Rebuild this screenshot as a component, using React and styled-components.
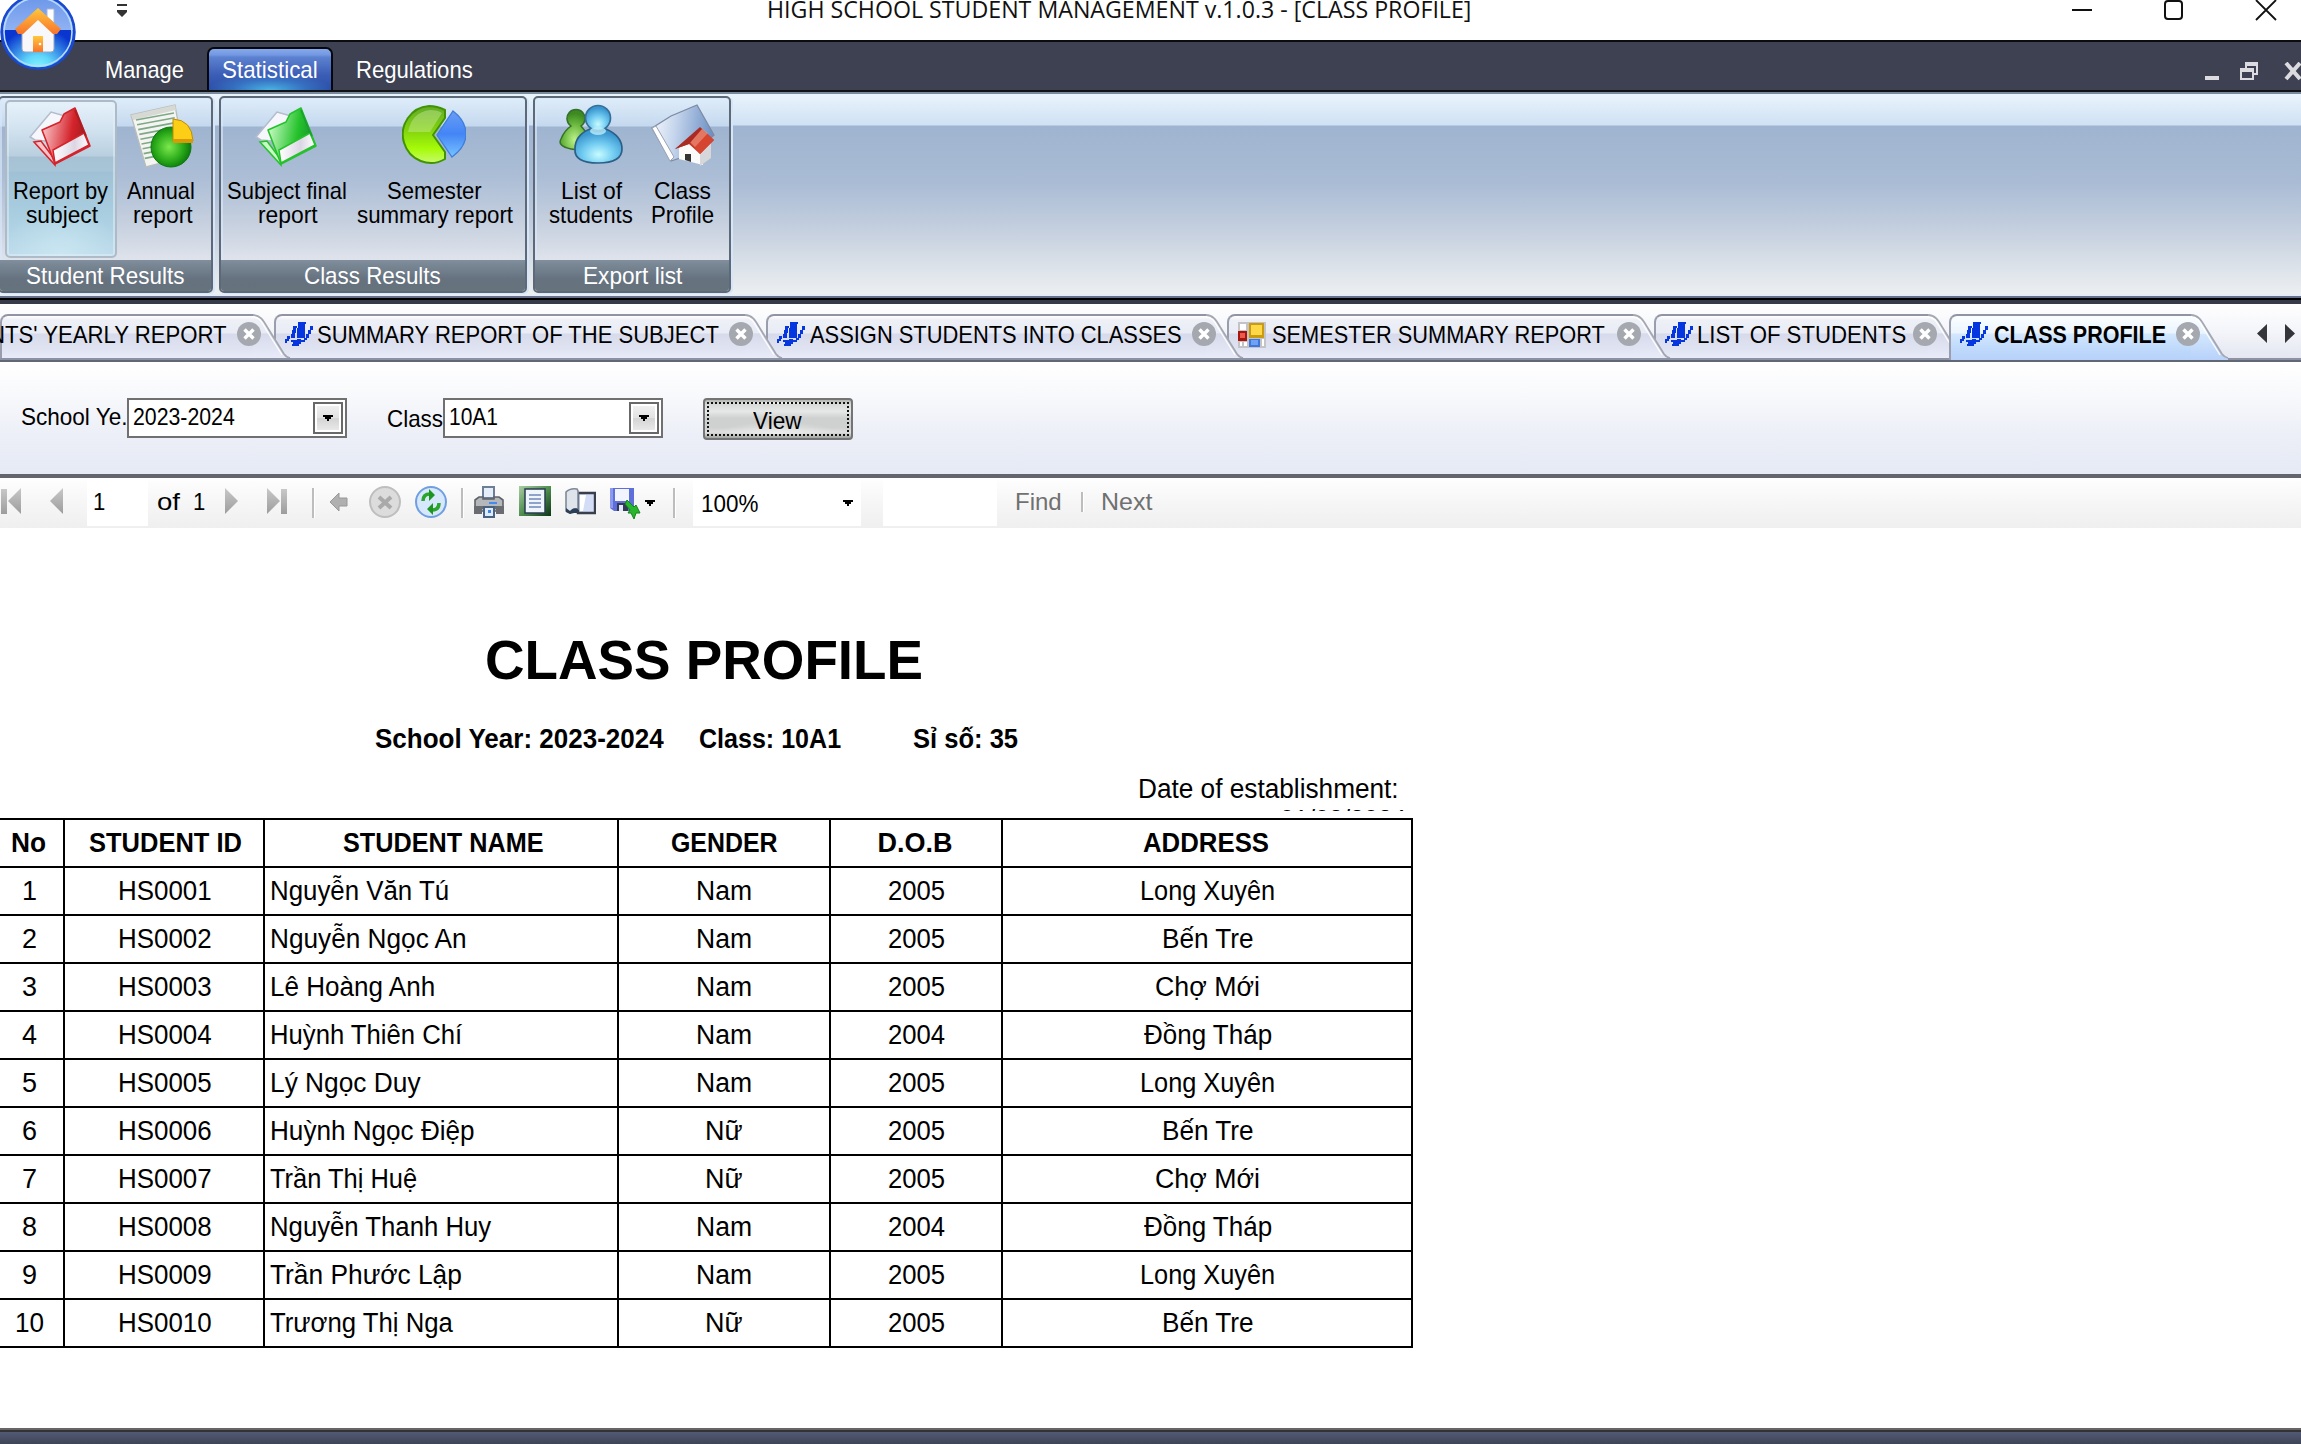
import React, { useLayoutEffect, useRef, useState } from 'react';
import styled, { createGlobalStyle, css } from 'styled-components';

const Global = createGlobalStyle`
  * { box-sizing: border-box; }
  body { margin: 0; background: #fff; color: #000; font-family: "Liberation Sans", Arial, sans-serif; overflow: hidden; }
  svg { display: block; flex: none; }
`;

/* A label squeezed horizontally to a given width */
const FitBox = styled.span`
  display: block;
  flex: none;
  width: ${(p) => p.$w}px;
  margin-left: ${(p) => p.$ml || 0}px;
  margin-right: ${(p) => p.$mr || 0}px;
  white-space: pre;
`;
const FitText = styled.span`
  display: inline-block;
  transform-origin: 0 50%;
`;
function Fit({ w, ml, mr, children }) {
  const ref = useRef(null);
  const [scale, setScale] = useState(1);
  useLayoutEffect(() => {
    setScale(w / ref.current.offsetWidth);
  }, [w]);
  return (
    <FitBox $w={w} $ml={ml} $mr={mr}>
      <FitText ref={ref} style={{ transform: `scaleX(${scale})` }}>{children}</FitText>
    </FitBox>
  );
}

const Window = styled.div`
  width: 2301px;
  height: 1444px;
  display: flex;
  flex-direction: column;
  overflow: hidden;
  position: relative;
  background: #fff;
`;

/* ---------- Title bar ---------- */
const TitleBar = styled.header`
  height: 40px;
  flex: none;
  display: flex;
  align-items: flex-start;
  padding-left: 117px;
  font: 24px/32px "Open Sans", "Noto Sans", sans-serif;
`;
const QuickMenu = styled.div`
  margin-top: 4px;
  width: 10px;
`;
const TitleText = styled.div`
  margin: -7px 0 0 640px;
  color: #111;
`;
const Orb = styled.div`
  position: absolute;
  left: 0;
  top: -6px;
`;

/* ---------- Menu band ---------- */
const MenuBand = styled.nav`
  height: 52px;
  flex: none;
  border-top: 2px solid #0b0c10;
  border-bottom: 2px solid #101216;
  background: #3d4151;
  display: flex;
  font-size: 24px;
  line-height: 28px;
  color: #fff;
`;
const MenuItem = styled.div`
  width: ${(p) => p.$w}px;
  margin-left: ${(p) => p.$ml || 0}px;
  margin-top: 5px;
  padding-top: 9px;
  display: flex;
  justify-content: center;
  ${(p) =>
    p.$active &&
    css`
      height: 43px;
      padding-top: 7px;
      border: 2px solid #05070c;
      border-bottom: 0;
      border-radius: 7px 7px 0 0;
      background: radial-gradient(ellipse 62px 17px at 50% 100%, #4ab4e4, rgba(60, 140, 215, 0.5) 60%, transparent),
        linear-gradient(#86a9ec 0, #7398e2 6px, #5d82d0 8px, #3b5db6 26px, #2a4fa6);
    `}
`;
const MdiButtons = styled.div`
  margin-left: auto;
  padding-top: 20px;
`;

/* ---------- Ribbon ---------- */
const Ribbon = styled.section`
  height: 204px;
  flex: none;
  border-top: 2px solid #7b899c;
  background: linear-gradient(#eaf4fd 0, #cfe1f3 31px, #9fb4d0 32px, #aabcd5 90px, #cdd6e2 150px, #eef0f2 202px);
  display: flex;
  align-items: flex-start;
  gap: 6px;
  padding-top: 2px;
`;
const Group = styled.div`
  width: ${(p) => p.$w}px;
  margin-left: ${(p) => p.$ml || 0}px;
  height: 197px;
  flex: none;
  border: 2px solid #5d6978;
  border-radius: 5px;
  box-shadow: 2px 1px 0 #d6e5f7, inset 2px 1px 0 rgba(216, 232, 250, 0.65);
  background: linear-gradient(#dfedfa 0, #c4d8ee 28px, #9fb4d0 29px, #acbed6 80px, #c6d0df 125px, #e0e4ec 164px);
  display: flex;
  flex-direction: column;
  overflow: hidden;
`;
const GroupBody = styled.div`
  height: 164px;
  display: flex;
  padding: 2px 0 0 ${(p) => p.$pl}px;
`;
const GroupLabel = styled.div`
  flex: 1;
  background: linear-gradient(#808e9d, #66727f 60%, #65737c);
  color: #fff;
  display: flex;
  padding-left: ${(p) => p.$pl}px;
  font-size: 24px;
  line-height: 31px;
`;
const RibbonButton = styled.div`
  width: ${(p) => p.$w}px;
  margin-right: ${(p) => p.$mr || 0}px;
  height: 158px;
  flex: none;
  display: flex;
  flex-direction: column;
  align-items: center;
  padding-top: 2px;
  font-size: 24px;
  line-height: 24px;
  border: 2px solid transparent;
  border-radius: 5px;
  ${(p) =>
    p.$active &&
    css`
      border-color: #aebbc6;
      box-shadow: inset 0 0 0 2px rgba(225, 240, 250, 0.5);
      background: radial-gradient(ellipse 60px 50px at 50% 100%, #c9e6f1, transparent),
        linear-gradient(#e6f2fb 0, #d3e3f0 26px, #b9cfdf 54px, #a6c1d4 55px, #a8c5d8 69px, #a0c1d5 70px, #aacfe1 115px, #bedbeb 156px);
    `}
`;
const Icon64 = styled.div`
  height: 75px;
  flex: none;
`;

const RibbonRule = styled.div`
  height: 10px;
  flex: none;
  margin-top: -2px;
  background: linear-gradient(#e6edf6 0 2px, #66718f 2px 4px, #000 4px 6px, #373b49 6px);
`;

/* ---------- Document tabs ---------- */
const TabStrip = styled.div`
  height: 56px;
  flex: none;
  border-bottom: 2px solid #8e92a2;
  background: linear-gradient(#fff, #f4f5fa 50%, #e4e7f1);
  display: flex;
  align-items: flex-start;
  padding-top: 10px;
  font-size: 24px;
  line-height: 28px;
`;
const TabBox = styled.div`
  position: relative;
  z-index: ${(p) => p.$z};
  width: ${(p) => p.$w}px;
  flex: none;
  display: flex;
`;
const TabBody = styled.div`
  width: ${(p) => p.$w - 21}px;
  height: ${(p) => (p.$active ? 46 : 44)}px;
  flex: none;
  display: flex;
  align-items: flex-start;
  padding: 5px 0 0 ${(p) => p.$pl}px;
  border-top: 2px solid #9094a4;
  border-left: 2px solid #9a9eac;
  border-top-left-radius: 8px;
  font-weight: ${(p) => (p.$active ? 'bold' : 'normal')};
  background: ${(p) =>
    p.$active
      ? 'linear-gradient(#fbfeff, #eaf4fe 17px, #d3e7fd 18px, #bfdafb 32px, #b7d1fa)'
      : 'linear-gradient(#fff, #eef0f7 4px, #e9ecf5 17px, #d6daeb 18px, #dfe3f1 32px, #e8ebf8)'};
`;
const TabClose = styled.div`
  position: relative;
  z-index: 2;
  margin: 1px 0 0 ${(p) => p.$ml}px;
`;
const TabIcon = styled.div`
  margin: 1px 4px 0 0;
`;
const StripArrows = styled.div`
  margin: 10px 0 0 45px;
`;

/* ---------- Filter panel ---------- */
const FilterPanel = styled.section`
  height: 118px;
  flex: none;
  border-top: 2px solid #606876;
  border-bottom: 4px solid #62656e;
  background: linear-gradient(#fff, #f8f9fc 30%, #eceff7 65%, #e6eaf5);
  display: flex;
  align-items: flex-start;
  padding: 36px 0 0 21px;
  font-size: 24px;
  line-height: 36px;
`;
const FieldLabel = styled.label`
  width: ${(p) => p.$w}px;
  margin-left: ${(p) => p.$ml || 0}px;
  padding-top: ${(p) => p.$pt || 0}px;
  flex: none;
`;
const Select = styled.div`
  width: 220px;
  height: 40px;
  flex: none;
  border: 2px solid #707070;
  background: #fff;
  display: flex;
  justify-content: space-between;
  padding: 0 2px 0 4px;
  line-height: 34px;
`;
const SelectButton = styled.div`
  width: 30px;
  height: 32px;
  margin-top: 2px;
  border: 2px solid #686868;
  box-shadow: inset 0 0 0 2px #fff;
  background: linear-gradient(#f2f2f2, #e2e2e2 50%, #d4d4d4 52%, #ececec);
  display: flex;
  align-items: center;
  justify-content: center;
`;
const ViewButton = styled.div`
  width: 150px;
  height: 42px;
  margin-left: 40px;
  border: 2px solid #747474;
  border-radius: 4px;
  padding: 2px;
  background: linear-gradient(#b4b6b4, #d8dad8 12%, #e6e8e7 30%, #cfd1d0 48%, #cfd1d0 72%, #dedfde 85%, #a2a4a2);
`;
const ViewFocus = styled.div`
  height: 34px;
  border: 2px dotted #111;
  display: flex;
  justify-content: center;
  padding-right: 2px;
  line-height: 33px;
  background: radial-gradient(ellipse 60px 12px at 50% 100%, #eeefee, transparent);
`;

/* ---------- Report toolbar ---------- */
const Toolbar = styled.div`
  height: 50px;
  flex: none;
  display: flex;
  align-items: flex-start;
  background: linear-gradient(#fefefe, #f6f6f6 50%, #efefef);
  font-size: 24px;
  line-height: 28px;
`;
const Item = styled.div`
  margin: ${(p) => p.$y}px 0 0 ${(p) => p.$ml}px;
  color: ${(p) => (p.$muted ? '#707070' : '#000')};
  flex: none;
`;
const Separator = styled.div`
  width: 3px;
  height: ${(p) => p.$h || 30}px;
  margin: ${(p) => p.$y || 10}px 0 0 ${(p) => p.$ml}px;
  border-left: 2px solid #bdbdbd;
  border-right: 1px solid #fff;
  flex: none;
`;
const Field = styled.div`
  width: ${(p) => p.$w}px;
  height: 46px;
  margin: 2px 0 0 ${(p) => p.$ml}px;
  padding: ${(p) => p.$pt || 8}px 8px 0 8px;
  background: #fff;
  display: flex;
  justify-content: space-between;
  flex: none;
`;

/* ---------- Report ---------- */
const Report = styled.main`
  flex: 1;
  overflow: hidden;
  background: #fff;
`;
const Heading = styled.h1`
  margin: 0;
  padding: 98px 0 0 485px;
  font-size: 56px;
  line-height: 68px;
  height: 194px;
`;
const Summary = styled.div`
  display: flex;
  height: 52px;
  padding-left: 375px;
  font-size: 27px;
  line-height: 34px;
  font-weight: bold;
`;
const Established = styled.div`
  height: 37px;
  width: 1406px;
  overflow: hidden;
  display: flex;
  flex-direction: column;
  align-items: flex-end;
  font-size: 27px;
  line-height: 31px;
`;
const Table = styled.div`
  margin: 7px 0 0 -6px;
  width: 1419px;
  border: solid #000;
  border-width: 2px 2px 0 2px;
`;
const Row = styled.div`
  display: grid;
  grid-template-columns: 69px 200px 354px 212px 172px 1fr;
  height: 48px;
  border-bottom: 2px solid #000;
  font-size: 27px;
  line-height: 47px;
  font-weight: ${(p) => (p.$head ? 'bold' : 'normal')};
`;
const Cell = styled.div`
  display: flex;
  justify-content: ${(p) => (p.$left ? 'flex-start' : 'center')};
  padding-left: ${(p) => p.$pl || 0}px;
  padding-right: ${(p) => p.$pr || 0}px;
  border-right: 2px solid #000;
  &:last-child { border-right: 0; }
`;
const StatusBar = styled.footer`
  height: 16px;
  flex: none;
  border-top: 2px solid #666;
  background: linear-gradient(#333 0 2px, #515a76 2px, #3f4455);
`;

/* ---------- Icons ---------- */
const HomeOrb = () => (
  <svg width="77" height="77" viewBox="0 0 77 77">
    <defs>
      <linearGradient id="orbTop" x1="0" y1="0" x2="0" y2="1">
        <stop offset="0" stopColor="#6a95e8" /><stop offset="1" stopColor="#8fb2f3" />
      </linearGradient>
      <radialGradient id="orbLow" cx=".5" cy="1.02" r=".58">
        <stop offset="0" stopColor="#8ffcff" /><stop offset=".35" stopColor="#5fd6fb" /><stop offset="1" stopColor="#0a36cf" />
      </radialGradient>
      <linearGradient id="roof" x1="0" y1="0" x2="0" y2="1">
        <stop offset="0" stopColor="#ffc83c" /><stop offset="1" stopColor="#f8742c" />
      </linearGradient>
    </defs>
    <circle cx="38" cy="38" r="37" fill="url(#orbLow)" />
    <path d="M3 36a35 35 0 0 1 70 0z" fill="url(#orbTop)" />
    <circle cx="38" cy="38" r="36.5" fill="none" stroke="#1a49cf" strokeWidth="2.5" />
    <circle cx="38" cy="38" r="34" fill="none" stroke="#b6dcff" strokeWidth="1.6" />
    <path d="M47 15h7v14l-7-6z" fill="#fff" stroke="#a9b6d8" />
    <path d="M22 36L38 22l16 14v19q0 3-3 3H25q-3 0-3-3z" fill="#f8f8fa" stroke="#9aa5bb" />
    <path d="M15 35L38 14l23 21-4 5h-4L38 26 23 40h-5z" fill="url(#roof)" />
    <path d="M33 42h10v16H33z" fill="url(#roof)" /><circle cx="40" cy="50" r="1.3" fill="#fff" />
  </svg>
);

const BookIcon = ({ c1, c2, c3, id }) => (
  <svg width="64" height="64" viewBox="2 0 64 64">
    <defs>
      <linearGradient id={id} x1="0" y1=".4" x2="1" y2=".6">
        <stop offset="0" stopColor={c3} /><stop offset=".6" stopColor={c1} /><stop offset="1" stopColor={c2} />
      </linearGradient>
      <linearGradient id={id + 'p'} x1="0" y1="0" x2="1" y2="0">
        <stop offset="0" stopColor="#fff" /><stop offset=".6" stopColor="#dcd6e4" /><stop offset="1" stopColor="#fff" />
      </linearGradient>
    </defs>
    <path d="M3 33L24 8l14 4-8 26-22-2z" fill="#f5f7fc" stroke="#b3bccb" strokeWidth="1.5" />
    <path d="M7 38l7-1 14 19v5z" fill={c3} stroke={c1} strokeWidth="1.5" />
    <path d="M15 26l18-8 4-8 11-6 15 38-35 18z" fill={`url(#${id})`} stroke={c1} strokeWidth="1.6" strokeLinejoin="round" />
    <path d="M26 46l31-17 5 12-34 18z" fill={`url(#${id}p)`} stroke={c1} strokeWidth="1.5" />
    <path d="M48 6l11 26" stroke={c2} strokeWidth="2" opacity=".5" />
  </svg>
);

const AnnualIcon = () => (
  <svg width="64" height="64" viewBox="0 0 64 64">
    <defs><radialGradient id="grn" cx=".45" cy=".5" r=".55"><stop offset="0" stopColor="#7ce84e" /><stop offset=".6" stopColor="#2fae1c" /><stop offset="1" stopColor="#0b7a0c" /></radialGradient></defs>
    <path d="M1 11L45 1l9 52-38 10z" fill="#f4f5f2" stroke="#b8bdb8" strokeWidth="1.3" />
    <path d="M1 11L45 1l1 5L3 16z" fill="#d7d9d5" />
    {[0, 1, 2, 3, 4, 5, 6, 7, 8].map((i) => (
      <path key={i} d={`M${6 + i * 1.1} ${16 + i * 4.8}L${44 + i * 0.8} ${9 + i * 4.8}`} stroke="#7fa886" strokeWidth="1.6" />
    ))}
    <circle cx="41" cy="43" r="20" fill="url(#grn)" stroke="#0d7a10" />
    <path d="M43 15q19 1 20 22H43z" fill="#fccf16" stroke="#c08c05" /><path d="M43 35h20v4H43z" fill="#d79a08" />
  </svg>
);

const PieIcon = () => (
  <svg width="64" height="64" viewBox="0 0 64 64">
    <defs>
      <linearGradient id="lime" x1="0" y1="0" x2="0" y2="1"><stop offset="0" stopColor="#62ab28" /><stop offset=".4" stopColor="#7fd010" /><stop offset=".75" stopColor="#a6fb08" /><stop offset="1" stopColor="#c8f96c" /></linearGradient>
      <linearGradient id="pblue" x1="0" y1="0" x2="0" y2="1"><stop offset="0" stopColor="#6a9df5" /><stop offset=".5" stopColor="#4385f6" /><stop offset="1" stopColor="#78c4ff" /></linearGradient>
    </defs>
    <path d="M43 6Q35 2 27 2a28 28.500 0 1 0 16 53V48L31 31 43 14z" fill="url(#lime)" stroke="#419304" strokeWidth="2" strokeLinejoin="round" />
    <path d="M6 28Q10 8 28 6q8 0 12 3L28 28z" fill="#d5efaa" opacity=".4" />
    <path d="M51 7q13 10 13 23T50 53L35 31z" fill="url(#pblue)" stroke="#3f7edc" strokeWidth="1.3" />
  </svg>
);

const PeopleIcon = () => (
  <svg width="64" height="64" viewBox="0 0 64 64">
    <defs>
      <radialGradient id="pb" cx=".5" cy=".75" r=".65"><stop offset="0" stopColor="#c6fbff" /><stop offset=".5" stopColor="#74cdf2" /><stop offset="1" stopColor="#3a96cf" /></radialGradient>
      <radialGradient id="pg" cx=".5" cy=".75" r=".65"><stop offset="0" stopColor="#bcf28b" /><stop offset=".6" stopColor="#6ab83e" /><stop offset="1" stopColor="#3d8a22" /></radialGradient>
    </defs>
    <path d="M12 22a9 9 0 1 1 10 0l8 10v12q-8 3-18 1-14-3-10-10 3-8 10-13z" fill="url(#pg)" stroke="#356f2a" strokeWidth="1.5" />
    <path d="M31 25q8 5 16 0 16 7 16 20 0 14-24 14T16 45q0-14 15-20z" fill="url(#pb)" stroke="#2d5f86" strokeWidth="1.7" />
    <circle cx="39" cy="14" r="12.500" fill="url(#pb)" stroke="#35709a" strokeWidth="1.7" />
    <ellipse cx="39" cy="27" rx="8" ry="4" fill="#b9eefc" opacity=".8" />
  </svg>
);

const ProfileIcon = () => (
  <svg width="64" height="64" viewBox="0 0 64 64">
    <defs><linearGradient id="pf" x1="0" y1=".3" x2="1" y2=".4"><stop offset="0" stopColor="#f3f6fb" /><stop offset=".35" stopColor="#c9d8ee" /><stop offset="1" stopColor="#6a8fc4" /></linearGradient></defs>
    <path d="M1 24L20 12l26-11 17 30-25 20-18 6z" fill="url(#pf)" stroke="#7d8aa2" strokeWidth="1.3" />
    <path d="M1 24l4-2 18 31-4 4z" fill="#fff" stroke="#9aa3b2" />
    <path d="M28 42l14-8 10 16v11L28 55z" fill="#fafafa" /><path d="M49 48l11-11v17L49 62z" fill="#d5d7db" />
    <path d="M50 24L24 45l14-5 11 10 14-14z" fill="#c8382a" /><path d="M50 24L39 38l10 12 14-14z" fill="#d6452f" /><path d="M50 24L39 38l5 5 13-14z" fill="#ec9a83" opacity=".6" />
    <path d="M24 45l25-22 2 2-13 15z" fill="#a92b22" />
    <path d="M34 50h6v8l-6-2z" fill="#333" />
  </svg>
);

const ScribbleIcon = () => (
  <svg width="28" height="24" viewBox="0 0 28 24" fill="#0536e0">
    <path d="M13 0h8v2h-1v14h-8V6h1z" />
    <path d="M8 4h4v2h-1v5h-1v5H6v-4h1V8h1zM25 4h3v4h-2v4h-2v4h-2v2h-3v-2h2v-4h2V8h2z" />
    <path d="M2 14h3v3H4v2H2v2H0v-4h2zM6 18h6v-1h4v1h4v2h-4v2h-2v2H7v-2h1v-2H6z" />
  </svg>
);

const FormIcon = () => (
  <svg width="28" height="26" viewBox="0 0 28 26">
    <path d="M0 0h28v26H0z" fill="#c4c4c6" />
    <path d="M2 2h6v6H2zM2 20h2v4H2zM6 20h3v4H6zM24 17h2v7h-2z" fill="#fff" />
    <path d="M11 1h15v15H11z" fill="#c99a12" /><path d="M13 3h11v10H13z" fill="#ffd848" />
    <path d="M0 9h9v10H0z" fill="#a8150f" /><path d="M2 11h5v5H2z" fill="#ec5a4d" />
    <path d="M11 17h11v8H11z" fill="#3f76dd" /><path d="M13 18h7v5h-7z" fill="#6fa2f5" />
  </svg>
);

const CloseDot = () => (
  <svg width="24" height="24" viewBox="0 0 24 24">
    <circle cx="12" cy="12" r="12" fill="#a5a9af" />
    <path d="M7.500 7.500l9 9m0-9l-9 9" stroke="#fff" strokeWidth="3.400" />
  </svg>
);

const TabEdge = ({ active }) => {
  const h = active ? 46 : 44;
  const id = active ? 'edgeOn' : 'edgeOff';
  return (
    <svg width="38" height={h} viewBox={`0 0 38 ${h}`}>
      <defs>
        <linearGradient id={id} x1="0" y1="0" x2="0" y2="1">
          {active ? (
            <><stop offset=".04" stopColor="#fbfeff" /><stop offset=".42" stopColor="#eaf4fe" /><stop offset=".44" stopColor="#d3e7fd" /><stop offset="1" stopColor="#b7d1fa" /></>
          ) : (
            <><stop offset=".04" stopColor="#fff" /><stop offset=".13" stopColor="#eef0f7" /><stop offset=".43" stopColor="#e9ecf5" /><stop offset=".45" stopColor="#d6daeb" /><stop offset="1" stopColor="#e8ebf8" /></>
          )}
        </linearGradient>
      </defs>
      <path d={`M0 0C8 1 11 8 16 16L31 40Q33 44 37 44V${h}H0z`} fill={`url(#${id})`} />
      <path d="M0 1C8 1 11 8 16 16L31 40Q33 43 37 44" fill="none" stroke="#a4a7b1" strokeWidth="1.8" />
      <path d="M0 3C7 3 9 9 14 17L29 41" fill="none" stroke="#fff" strokeWidth="1.2" />
    </svg>
  );
};

const Caret = ({ w = 10, h = 6 }) => (
  <svg width={w} height={h} viewBox="0 0 10 6"><path d="M0 0h10v2H8v2H6v2H4V4H2V2H0z" fill="#000" /></svg>
);

const NavIcon = ({ kind }) => {
  const w = kind === 'prev' || kind === 'next' ? 14 : 20;
  const flip = kind === 'next' || kind === 'last';
  return (
    <svg width={w} height="26" viewBox={`0 0 ${w} 26`}>
      <defs><linearGradient id="nav" x1="0" y1="0" x2="0" y2="1"><stop offset="0" stopColor="#c8c8c8" /><stop offset="1" stopColor="#9c9c9c" /></linearGradient></defs>
      <g transform={flip ? `translate(${w} 0) scale(-1 1)` : undefined} fill="url(#nav)">
        {w === 20 && <path d="M0 1h6v25H0z" />}
        <path d={`M${w} 0v26L${w - 13} 13z`} />
      </g>
    </svg>
  );
};

const BackIcon = () => (
  <svg width="19" height="20" viewBox="0 0 19 20"><path d="M10 1v5h8v8h-8v5L1 10z" fill="#b0b0b0" stroke="#989898" /></svg>
);
const StopIcon = () => (
  <svg width="32" height="32" viewBox="0 0 32 32"><circle cx="16" cy="16" r="15" fill="#dcdcdc" stroke="#bebebe" strokeWidth="2" /><path d="M10 11l12 11m0-11L10 22" stroke="#a9a9a9" strokeWidth="4" /></svg>
);
const RefreshIcon = () => (
  <svg width="32" height="32" viewBox="0 0 32 32">
    <circle cx="16" cy="16" r="15" fill="#d7e8fd" stroke="#6f9fe0" strokeWidth="2" />
    <path d="M8 15c0-5 3-7 7-7M24 17c0 5-3 7-7 7" fill="none" stroke="#2ba62b" strokeWidth="3.500" />
    <path d="M14 3l6 6-6 6zM18 17l-6 6 6 6z" fill="#1d961f" />
  </svg>
);
const PrintIcon = () => (
  <svg width="32" height="32" viewBox="0 0 32 32">
    <path d="M10 1h11v11H10z" fill="#e5edf8" stroke="#6c7f96" strokeWidth="2" />
    <path d="M2 14l4-3h4v2h11v-2h5l4 3v11H2z" fill="#b5b7bb" stroke="#5e6168" strokeWidth="1.6" />
    <path d="M1 20h30v8h-8v-5H9v5H1z" fill="#6a6c72" /><path d="M16 16h8v2h-8z" fill="#3f8cf2" />
    <path d="M11 21h10v10H11z" fill="#ddeaff" stroke="#48627f" strokeWidth="2" /><path d="M15 24h3v3h-3z" fill="#3c87e6" />
  </svg>
);
const LayoutIcon = () => (
  <svg width="32" height="30" viewBox="0 0 32 30">
    <defs><linearGradient id="lay" x1="0" y1="0" x2="1" y2="1"><stop offset="0" stopColor="#a9cda2" /><stop offset=".5" stopColor="#4f8f50" /><stop offset="1" stopColor="#0c3515" /></linearGradient></defs>
    <path d="M0 0h32v30H0z" fill="url(#lay)" /><path d="M6 3h20v24H6z" fill="#f0f4fc" stroke="#2a3c50" strokeWidth="1.5" />
    <path d="M10 9h12M10 13h12M10 17h12M10 21h12" stroke="#6c88b8" strokeWidth="1.6" />
  </svg>
);
const PagesIcon = () => (
  <svg width="31" height="28" viewBox="0 0 31 28">
    <path d="M13 5h17v20H13z" fill="#d3def6" stroke="#3a3f4c" strokeWidth="2.400" /><path d="M15 7h6l-3 16h-3z" fill="#fff" />
    <path d="M1 4q4-4 11-3l1 2v18q-5-1-8 4l-4-2z" fill="#dfe3ea" stroke="#7f8998" strokeWidth="1.6" />
    <path d="M1 20l4 3q3-4 8-2v4H9l-4 1-4-2z" fill="#2b3f58" />
  </svg>
);
const SaveIcon = () => (
  <svg width="32" height="31" viewBox="0 0 32 31">
    <path d="M0 0h24v23H4l-4-3z" fill="#5f6fda" /><path d="M5 1h14v12H5z" fill="#f2f5ff" /><path d="M0 0h3v20H0z" fill="#8d99ef" />
    <path d="M7 15h11v8H7z" fill="#333a55" /><path d="M9 17h4v6H9z" fill="#e4e8f8" />
    <path d="M17 12l7 7 2-2 4 8h-4l-2 6-3-6h-3l2-3-5-6z" fill="#28b62c" stroke="#12841a" />
  </svg>
);

/* ---------- Data ---------- */
const tabs = [
  { w: 274, tx: -13, text: "NTS' YEARLY REPORT", tw: 238, close: 10 },
  { w: 492, icon: 'scribble', text: 'SUMMARY REPORT OF THE SUBJECT', tw: 402, close: 10 },
  { w: 461, icon: 'scribble', tx: 1, text: 'ASSIGN STUDENTS INTO CLASSES', tw: 372, close: 10 },
  { w: 427, icon: 'form', tx: 2, text: 'SEMESTER SUMMARY REPORT', tw: 333, close: 12 },
  { w: 295, icon: 'scribble', text: 'LIST OF STUDENTS', tw: 209, close: 7 },
  { w: 263, icon: 'scribble', tx: 2, text: 'CLASS PROFILE', tw: 172, active: true, close: 10 },
];

const address = { 'Long Xuyên': 135, 'Bến Tre': 92, 'Chợ Mới': 105, 'Đồng Tháp': 128 };
const students = [
  ['Nguyễn Văn Tú', 179, 'Nam', '2005', 'Long Xuyên'],
  ['Nguyễn Ngọc An', 197, 'Nam', '2005', 'Bến Tre'],
  ['Lê Hoàng Anh', 165, 'Nam', '2005', 'Chợ Mới'],
  ['Huỳnh Thiên Chí', 192, 'Nam', '2004', 'Đồng Tháp'],
  ['Lý Ngọc Duy', 151, 'Nam', '2005', 'Long Xuyên'],
  ['Huỳnh Ngọc Điệp', 205, 'Nữ', '2005', 'Bến Tre'],
  ['Trần Thị Huệ', 147, 'Nữ', '2005', 'Chợ Mới'],
  ['Nguyễn Thanh Huy', 221, 'Nam', '2004', 'Đồng Tháp'],
  ['Trần Phước Lập', 192, 'Nam', '2005', 'Long Xuyên'],
  ['Trương Thị Nga', 183, 'Nữ', '2005', 'Bến Tre'],
];

const BigButton = ({ w, mr, icon, lines, active }) => (
  <RibbonButton $w={w} $mr={mr} $active={active}>
    <Icon64>{icon}</Icon64>
    {lines.map(([text, tw, ml]) => (
      <Fit key={text} w={tw} ml={ml}>{text}</Fit>
    ))}
  </RibbonButton>
);

export default function App() {
  return (
    <Window>
      <Global />
      <TitleBar>
        <QuickMenu>
          <svg width="10" height="13" viewBox="0 0 10 13" fill="#333"><path d="M0 0h10v2H0zM0 6h10v2L5 13 0 8z" /></svg>
        </QuickMenu>
        <TitleText><Fit w={704}>HIGH SCHOOL STUDENT MANAGEMENT v.1.0.3 - [CLASS PROFILE]</Fit></TitleText>
        <Item $y={0} $ml={601}>
          <svg width="208" height="24" viewBox="0 0 208 24" fill="none" stroke="#111">
            <path d="M0 10h20" strokeWidth="2" />
            <rect x="93" y="1" width="17" height="18" rx="3" strokeWidth="2" />
            <path d="M184 0l20 20m0-20l-20 20" strokeWidth="1.800" />
          </svg>
        </Item>
      </TitleBar>

      <MenuBand>
        <MenuItem $w={101} $ml={94}><Fit w={79}>Manage</Fit></MenuItem>
        <MenuItem $w={126} $ml={12} $active><Fit w={96}>Statistical</Fit></MenuItem>
        <MenuItem $w={163}><Fit w={117}>Regulations</Fit></MenuItem>
        <MdiButtons>
          <svg width="97" height="20" viewBox="0 0 97 20" fill="none" stroke="#dcdce0">
            <path d="M1 16h14" strokeWidth="4" />
            <path d="M42 6V1h11v11h-4" strokeWidth="2" /><path d="M41 2h13" strokeWidth="4" />
            <path d="M37 8h12v9H37z" strokeWidth="2" /><path d="M36 8h14" strokeWidth="4" />
            <path d="M82 1l14 16m0-16L82 17" strokeWidth="4" />
          </svg>
        </MdiButtons>
      </MenuBand>

      <Ribbon>
        <Group $w={215} $ml={-2}>
          <GroupBody $pl={5}>
            <BigButton w={112} active icon={<BookIcon id="bred" c1="#d4232b" c2="#8e1a1a" c3="#fbc4c8" />} lines={[['Report by', 95, -1], ['subject', 72, 2]]} />
            <BigButton w={90} icon={<AnnualIcon />} lines={[['Annual', 68, -2], ['report', 60, 1]]} />
          </GroupBody>
          <GroupLabel $pl={26}><Fit w={158}>Student Results</Fit></GroupLabel>
        </Group>
        <Group $w={308}>
          <GroupBody $pl={1}>
            <BigButton w={130} mr={2} icon={<BookIcon id="bgreen" c1="#25c22c" c2="#158a2c" c3="#c8fbc4" />} lines={[['Subject final', 120, 0], ['report', 60, 2]]} />
            <BigButton w={160} icon={<PieIcon />} lines={[['Semester', 95, 0], ['summary report', 156, 1]]} />
          </GroupBody>
          <GroupLabel $pl={83}><Fit w={137}>Class Results</Fit></GroupLabel>
        </Group>
        <Group $w={198}>
          <GroupBody $pl={1}>
            <BigButton w={110} icon={<PeopleIcon />} lines={[['List of', 61], ['students', 84]]} />
            <BigButton w={74} icon={<ProfileIcon />} lines={[['Class', 57, -1], ['Profile', 63, -1]]} />
          </GroupBody>
          <GroupLabel $pl={48}><Fit w={99}>Export list</Fit></GroupLabel>
        </Group>
      </Ribbon>
      <RibbonRule />

      <TabStrip>
        {tabs.map((t, i) => (
          <TabBox key={t.text} $w={t.w} $z={t.active ? 20 : 10 - i}>
            <TabBody $w={t.w} $pl={t.icon ? 9 : 0} $active={t.active}>
              {t.icon && <TabIcon>{t.icon === 'form' ? <FormIcon /> : <ScribbleIcon />}</TabIcon>}
              <Fit w={t.tw} ml={t.tx}>{t.text}</Fit>
              <TabClose $ml={t.close}><CloseDot /></TabClose>
            </TabBody>
            <TabEdge active={t.active} />
          </TabBox>
        ))}
        <StripArrows>
          <svg width="39" height="20" viewBox="0 0 39 20" fill="#33353b"><path d="M10 0v19L0 9.500zM28 0v19l10-9.500z" /></svg>
        </StripArrows>
      </TabStrip>

      <FilterPanel>
        <FieldLabel $w={106} $pt={1}><Fit w={106}>School Ye.</Fit></FieldLabel>
        <Select>
          <Fit w={102}>2023-2024</Fit>
          <SelectButton><Caret /></SelectButton>
        </Select>
        <FieldLabel $w={57} $ml={39} $pt={3}><Fit w={56} ml={1}>Class</Fit></FieldLabel>
        <Select>
          <Fit w={49}>10A1</Fit>
          <SelectButton><Caret /></SelectButton>
        </Select>
        <ViewButton><ViewFocus><Fit w={49}>View</Fit></ViewFocus></ViewButton>
      </FilterPanel>

      <Toolbar>
        <Item $y={10} $ml={1}><NavIcon kind="first" /></Item>
        <Item $y={10} $ml={28}><NavIcon kind="prev" /></Item>
        <Field $w={61} $ml={24}><Fit w={12} ml={-2}>1</Fit></Field>
        <Item $y={10} $ml={9}><Fit w={23}>of</Fit></Item>
        <Item $y={10} $ml={13}><Fit w={12}>1</Fit></Item>
        <Item $y={10} $ml={20}><NavIcon kind="next" /></Item>
        <Item $y={10} $ml={28}><NavIcon kind="last" /></Item>
        <Separator $ml={25} />
        <Item $y={14} $ml={14}><BackIcon /></Item>
        <Item $y={8} $ml={21}><StopIcon /></Item>
        <Item $y={8} $ml={14}><RefreshIcon /></Item>
        <Separator $ml={14} />
        <Item $y={8} $ml={9}><PrintIcon /></Item>
        <Item $y={8} $ml={14}><LayoutIcon /></Item>
        <Item $y={10} $ml={14}><PagesIcon /></Item>
        <Item $y={10} $ml={14}><SaveIcon /></Item>
        <Item $y={22} $ml={3}><Caret /></Item>
        <Separator $ml={18} />
        <Field $w={168} $ml={17} $pt={10}><Fit w={57}>100%</Fit><Item $y={10} $ml={0}><Caret /></Item></Field>
        <Field $w={114} $ml={22} />
        <Item $y={10} $ml={18} $muted><Fit w={47}>Find</Fit></Item>
        <Separator $ml={19} $y={14} $h={20} />
        <Item $y={10} $ml={17} $muted><Fit w={51}>Next</Fit></Item>
      </Toolbar>

      <Report>
        <Heading><Fit w={438}>CLASS PROFILE</Fit></Heading>
        <Summary>
          <Fit w={289}>School Year: 2023-2024</Fit>
          <Fit w={142} ml={35}>Class: 10A1</Fit>
          <Fit w={105} ml={72}>Sỉ số: 35</Fit>
        </Summary>
        <Established>
          <Fit w={261} mr={7}>Date of establishment:</Fit>
          <Fit w={126}>01/03/2024</Fit>
        </Established>
        <Table>
          <Row $head>
            <Cell $pr={3}><Fit w={35}>No</Fit></Cell>
            <Cell $pl={3}><Fit w={153}>STUDENT ID</Fit></Cell>
            <Cell $pl={4}><Fit w={201}>STUDENT NAME</Fit></Cell>
            <Cell $pl={1}><Fit w={107}>GENDER</Fit></Cell>
            <Cell $pr={2}><Fit w={75}>D.O.B</Fit></Cell>
            <Cell $pr={3}><Fit w={126}>ADDRESS</Fit></Cell>
          </Row>
          {students.map(([name, w, gender, year, town], i) => (
            <Row key={name}>
              <Cell><Fit w={i === 9 ? 29 : 15}>{i + 1}</Fit></Cell>
              <Cell $pl={2}><Fit w={94}>{`HS${String(i + 1).padStart(4, '0')}`}</Fit></Cell>
              <Cell $left $pl={5}><Fit w={w}>{name}</Fit></Cell>
              <Cell><Fit w={gender === 'Nam' ? 56 : 38}>{gender}</Fit></Cell>
              <Cell $pl={1}><Fit w={57}>{year}</Fit></Cell>
              <Cell $pl={1}><Fit w={address[town]}>{town}</Fit></Cell>
            </Row>
          ))}
        </Table>
      </Report>
      <StatusBar />
      <Orb><HomeOrb /></Orb>
    </Window>
  );
}
